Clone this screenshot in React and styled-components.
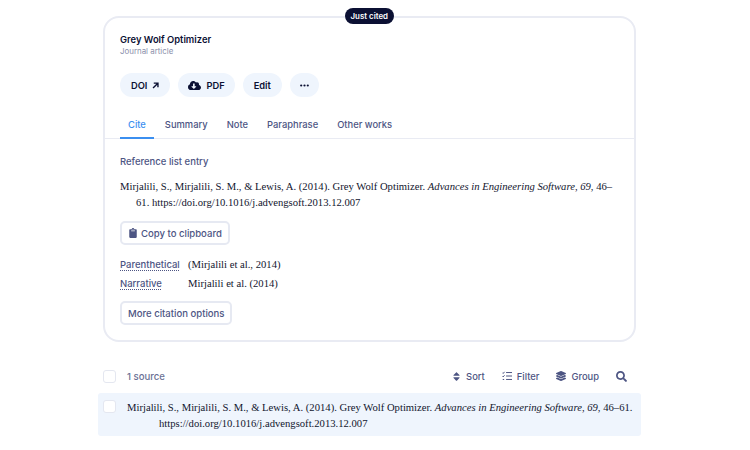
import React from 'react';
import styled, { createGlobalStyle } from 'styled-components';
import { FaCloudDownloadAlt, FaClipboard, FaSort, FaLayerGroup, FaSearch } from 'react-icons/fa';

const GlobalStyle = createGlobalStyle`
  html, body {
    margin: 0;
    padding: 0;
    background: #fff;
    overflow: hidden;
  }
`;

const Page = styled.div`
  width: 750px;
  height: 450px;
  padding: 16px 109px 0 98px;
  box-sizing: border-box;
  font-family: Inter, "Liberation Sans", sans-serif;
  color: #0b1033;
`;

const Card = styled.section`
  position: relative;
  margin: 0 0 0 5px;
  width: 533px;
  height: 326px;
  box-sizing: border-box;
  border: 2px solid #e9ebf3;
  border-radius: 16px;
`;

const Badge = styled.span`
  position: absolute;
  top: -10px;
  right: 240px;
  height: 16px;
  line-height: 16px;
  padding: 0 6px;
  border-radius: 8px;
  background: #0b1033;
  color: #fff;
  font-size: 7.9px;
  font-weight: 600;
  white-space: nowrap;
`;

const Header = styled.div`
  padding: 15px 15px 0;
`;

const Title = styled.h1`
  margin: 0;
  font-size: 9.4px;
  line-height: 13px;
  font-weight: 600;
  color: #0b1033;
`;

const Subtitle = styled.div`
  font-size: 7.9px;
  line-height: 10px;
  color: #8b90ab;
`;

const Actions = styled.div`
  display: flex;
  gap: 8px;
  margin-top: 17px;
`;

const Pill = styled.button`
  display: flex;
  align-items: center;
  gap: ${(props) => props.$gap || 5}px;
  height: 24px;
  padding: 0 ${(props) => props.$pad || 11}px;
  border: none;
  border-radius: 12px;
  background: #eff5fd;
  color: #0b1033;
  font-family: inherit;
  font-size: 9.3px;
  font-weight: 600;
`;

const Tabs = styled.div`
  display: flex;
  margin-top: 14px;
  padding: 0 15px;
  border-bottom: 1px solid #e9ebf3;
`;

const Tab = styled.div`
  height: 28px;
  line-height: 27px;
  box-sizing: border-box;
  padding: 0 8px;
  margin-right: 3px;
  font-size: 9.4px;
  font-weight: 500;
  color: ${(props) => (props.$active ? '#3b8ff0' : '#4d5583')};
  border-bottom: ${(props) => (props.$active ? '2px solid #3b8ff0' : 'none')};
  margin-bottom: -1px;
  white-space: nowrap;
`;

const Body = styled.div`
  padding: 17px 15px 0;
`;

const SectionLabel = styled.div`
  font-size: 9.5px;
  line-height: 12px;
  font-weight: 500;
  color: #4d5583;
`;

const Reference = styled.p`
  margin: 11px 0 0;
  padding-left: 16px;
  text-indent: -16px;
  font-family: "Liberation Serif", serif;
  font-size: 10.65px;
  line-height: 16px;
  color: #12152e;
`;

const OutlineButton = styled.button`
  display: flex;
  align-items: center;
  gap: 3px;
  height: 24px;
  padding: 0 6px;
  margin-top: ${(props) => props.$top}px;
  box-sizing: border-box;
  border: 2px solid #e6e9f2;
  border-radius: 5px;
  background: #fff;
  color: #4d5583;
  font-family: inherit;
  font-size: 9.55px;
  font-weight: 500;
`;

const InText = styled.div`
  display: grid;
  grid-template-columns: 68px 1fr;
  row-gap: 3px;
  margin-top: 12px;
  align-items: center;
`;

const InTextLabel = styled.span`
  justify-self: start;
  font-size: 9.5px;
  line-height: 16px;
  font-weight: 500;
  color: #4d5583;
  text-decoration: underline dotted #4d5583;
  text-underline-offset: 2px;
`;

const InTextValue = styled.span`
  font-family: "Liberation Serif", serif;
  font-size: 10.65px;
  line-height: 16px;
  color: #12152e;
`;

const Toolbar = styled.div`
  display: flex;
  align-items: center;
  height: 51px;
  padding: 17px 14px 0 5px;
  box-sizing: border-box;
`;

const Checkbox = styled.span`
  flex: none;
  width: 11px;
  height: 11px;
  border: 1.5px solid #e4e7f0;
  border-radius: 3px;
  background: #fff;
`;

const Count = styled.span`
  margin-left: 11px;
  font-size: 9.6px;
  font-weight: 500;
  color: #6b7195;
`;

const Tools = styled.div`
  display: flex;
  align-items: center;
  gap: 17px;
  margin-left: auto;
`;

const Tool = styled.span`
  display: flex;
  align-items: center;
  gap: ${(props) => props.$gap || 5}px;
  font-size: 9.4px;
  font-weight: 500;
  color: #4d5583;
`;

const SourceRow = styled.div`
  display: flex;
  align-items: flex-start;
  width: 543px;
  height: 43px;
  padding: 7px 5px 0;
  box-sizing: border-box;
  background: #eff5fd;
  border-radius: 3px;
`;

const SourceText = styled.p`
  margin: 0 0 0 11px;
  padding-left: 32px;
  text-indent: -32px;
  font-family: "Liberation Serif", serif;
  font-size: 10.65px;
  line-height: 16px;
  color: #12152e;
`;

function ArrowUpRight() {
  return (
    <svg width="7" height="7" viewBox="0 0 10 10" fill="none" stroke="#0b1033" strokeWidth="2">
      <path d="M1.5 8.5 8 2M2.5 1.6h6v6" />
    </svg>
  );
}

function Dots() {
  return (
    <svg width="9" height="3" viewBox="0 0 9 3" fill="#0b1033">
      <circle cx="1.2" cy="1.5" r="1.1" />
      <circle cx="4.5" cy="1.5" r="1.1" />
      <circle cx="7.8" cy="1.5" r="1.1" />
    </svg>
  );
}

function FilterIcon() {
  return (
    <svg width="10" height="10" viewBox="0 0 11 10" fill="none" stroke="#4d5583" strokeWidth="1.1">
      <path d="M4.5 1.2H11M4.5 5H11M4.5 8.8H11" />
      <path d="M.5 1.4 1.3 2.2 2.8.4" />
      <path d="M.5 5.2 1.3 6 2.8 4.2" />
      <path d="M.8 8.8h1.6" />
    </svg>
  );
}

export default function App() {
  return (
    <Page>
      <GlobalStyle />
      <Card>
        <Badge>Just cited</Badge>
        <Header>
          <Title>Grey Wolf Optimizer</Title>
          <Subtitle>Journal article</Subtitle>
          <Actions>
            <Pill>DOI <ArrowUpRight /></Pill>
            <Pill $pad={10}><FaCloudDownloadAlt size={13} /> PDF</Pill>
            <Pill>Edit</Pill>
            <Pill $pad={10}><Dots /></Pill>
          </Actions>
        </Header>
        <Tabs>
          <Tab $active>Cite</Tab>
          <Tab>Summary</Tab>
          <Tab>Note</Tab>
          <Tab>Paraphrase</Tab>
          <Tab>Other works</Tab>
        </Tabs>
        <Body>
          <SectionLabel>Reference list entry</SectionLabel>
          <Reference>
            Mirjalili, S., Mirjalili, S. M., &amp; Lewis, A. (2014). Grey Wolf Optimizer. <i>Advances in Engineering Software</i>, <i>69</i>, 46–61. https://doi.org/10.1016/j.advengsoft.2013.12.007
          </Reference>
          <OutlineButton $top={10}><FaClipboard size={10} /> Copy to clipboard</OutlineButton>
          <InText>
            <InTextLabel>Parenthetical</InTextLabel>
            <InTextValue>(Mirjalili et al., 2014)</InTextValue>
            <InTextLabel>Narrative</InTextLabel>
            <InTextValue>Mirjalili et al. (2014)</InTextValue>
          </InText>
          <OutlineButton $top={9}>More citation options</OutlineButton>
        </Body>
      </Card>
      <Toolbar>
        <Checkbox />
        <Count>1 source</Count>
        <Tools>
          <Tool $gap={4}><FaSort size={11} /> Sort</Tool>
          <Tool><FilterIcon /> Filter</Tool>
          <Tool><FaLayerGroup size={10} /> Group</Tool>
          <Tool><FaSearch size={11} /></Tool>
        </Tools>
      </Toolbar>
      <SourceRow>
        <Checkbox />
        <SourceText>
          Mirjalili, S., Mirjalili, S. M., &amp; Lewis, A. (2014). Grey Wolf Optimizer. <i>Advances in Engineering Software</i>, <i>69</i>, 46–61. https://doi.org/10.1016/j.advengsoft.2013.12.007
        </SourceText>
      </SourceRow>
    </Page>
  );
}
